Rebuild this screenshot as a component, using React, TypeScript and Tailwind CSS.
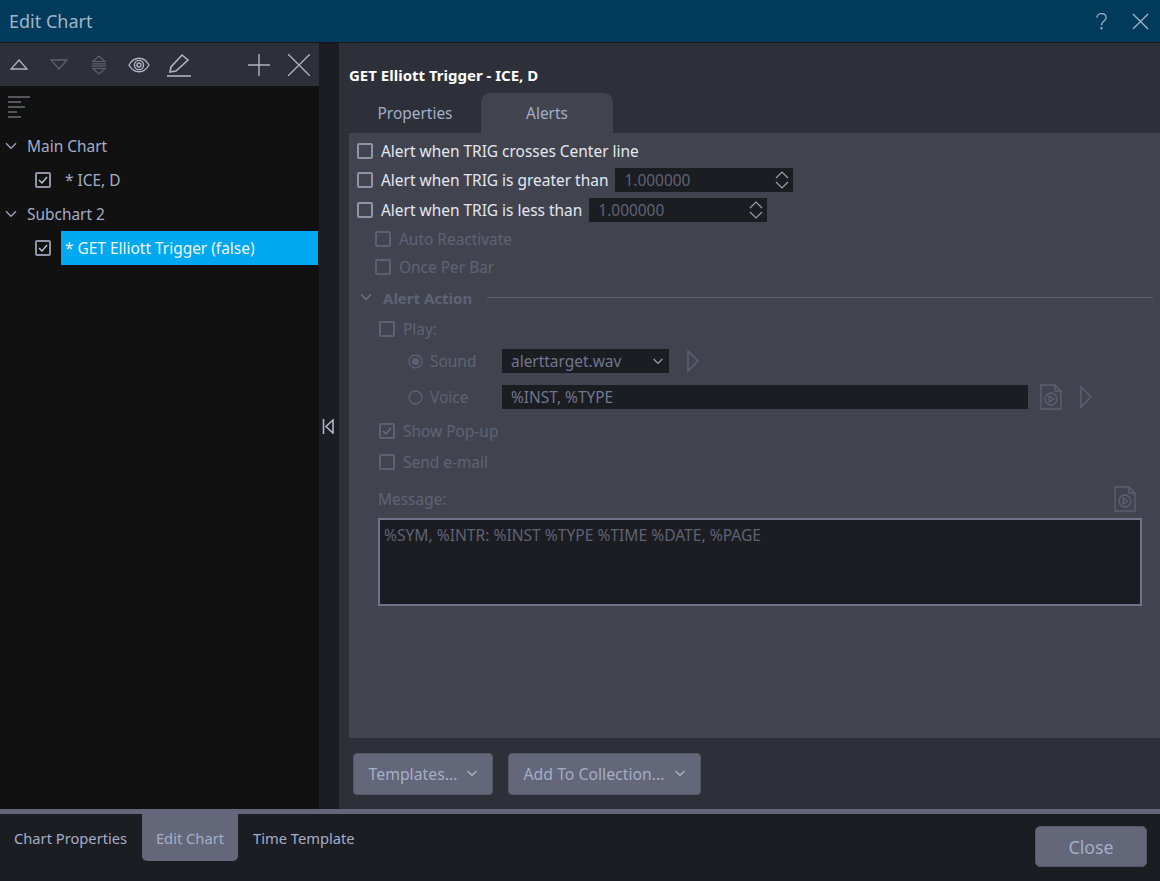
const FONT = "font-['Noto_Sans','Open_Sans',sans-serif]";

function Chevron({ className }: { className: string }) {
  return (
    <svg className={className} viewBox="0 0 12 8" fill="none" stroke="currentColor" strokeWidth={1.4}>
      <path d="M1 1.2 6 6.2 11 1.2" />
    </svg>
  );
}

function Check({ on, dim }: { on?: boolean; dim?: boolean }) {
  return (
    <svg className="w-[16px] h-[16px] shrink-0" viewBox="0 0 16 16" fill="none">
      <rect x="1" y="1" width="14" height="14" rx="1" stroke={dim ? "#5c6072" : "#9094a6"} strokeWidth={2} />
      {on && <path d="M4 8l3 3 5-6" stroke={dim ? "#6a6e80" : "#c4c8d4"} strokeWidth={1.4} />}
    </svg>
  );
}

function Radio({ on }: { on?: boolean }) {
  return (
    <svg className="w-[15px] h-[15px] shrink-0" viewBox="0 0 15 15" fill="none">
      <circle cx="7.5" cy="7.5" r="6.5" stroke="#5c6072" strokeWidth={1.4} />
      {on && <circle cx="7.5" cy="7.5" r="3.6" fill="#5c6072" />}
    </svg>
  );
}

function PlayTri() {
  return (
    <svg className="w-[12px] h-[24px] shrink-0" viewBox="0 0 12 24" fill="none" stroke="#5c6072" strokeWidth={1.4}>
      <path d="M1 2v20L11 12z" />
    </svg>
  );
}

function FilePlay() {
  return (
    <svg className="w-[22px] h-[26px] shrink-0" viewBox="0 0 22 26" fill="none" stroke="#5c6072" strokeWidth={1.3}>
      <path d="M1 1h14l6 6v18H1z" />
      <path d="M15 1v6h6" />
      <circle cx="11" cy="15" r="6" />
      <path d="M9.2 12v6l4.4-3z" />
    </svg>
  );
}

function Spin() {
  return (
    <svg className="w-[14px] h-[20px] -mt-[2px]" viewBox="0 0 14 20" fill="none" stroke="#9a9eae" strokeWidth={1.2}>
      <path d="M1 8l6-6 6 6M1 12l6 6 6-6" />
    </svg>
  );
}

function TreeGroup({ label }: { label: string }) {
  return (
    <div className="h-[34px] flex items-center pl-[5px]">
      <Chevron className="w-[12px] h-[8px] text-[#9ca3b8]" />
      <span className="ml-[10px] pt-[2px] text-[#a3aec8]">{label}</span>
    </div>
  );
}

function Row({ children, className }: { children: React.ReactNode; className: string }) {
  return <div className={`flex items-center ${className}`}>{children}</div>;
}

export default function App() {
  return (
    <div className={`${FONT} w-[1160px] h-[881px] flex flex-col overflow-hidden bg-[#1c1d23] text-[15.45px]`}>
      <div className="h-[43px] shrink-0 flex items-center justify-between pl-[9px] pr-[11px] bg-[#003b5b] border-b border-[#15171c]">
        <span className="text-[18px] text-[#a3b4c8]">Edit Chart</span>
        <div className="flex items-center gap-[25px] text-[#a3b4c8]">
          <svg className="w-[11px] h-[17px]" viewBox="0 0 12 18" fill="none" stroke="currentColor" strokeWidth={1.4}>
            <path d="M1 5c0-6 10-6 10 0 0 3.5-5 3.5-5 8" />
            <circle cx="6" cy="16.4" r="0.6" />
          </svg>
          <svg className="w-[17px] h-[17px]" viewBox="0 0 18 18" fill="none" stroke="currentColor" strokeWidth={1.4}>
            <path d="M1 1l16 16M17 1 1 17" />
          </svg>
        </div>
      </div>

      <div className="flex-1 flex min-h-0">
        <div className="w-[319px] shrink-0 flex flex-col bg-[#111111]">
          <div className="h-[43px] shrink-0 bg-[#2d3039] flex items-center pl-[10px] pr-[9px]">
            <svg className="w-[18px] h-[11px]" viewBox="0 0 18 11" fill="none" stroke="#b0b4c4" strokeWidth={1.3}>
              <path d="M1 10h16L9 1z" />
            </svg>
            <svg className="ml-[22px] w-[18px] h-[11px]" viewBox="0 0 18 11" fill="none" stroke="#5c6072" strokeWidth={1.3}>
              <path d="M1 1h16L9 10z" />
            </svg>
            <svg className="ml-[24px] w-[14px] h-[20px]" viewBox="0 0 14 20" fill="none" stroke="#5c6072" strokeWidth={1.2}>
              <path d="M1 6.5h12L7 1zM1 13.5h12L7 19zM0 8.8h14M0 11.2h14" />
            </svg>
            <svg className="ml-[22px] w-[22px] h-[16px]" viewBox="0 0 22 16" fill="none" stroke="#b0b4c4" strokeWidth={1.4}>
              <path d="M1 8c5-9 15-9 20 0-5 9-15 9-20 0z" />
              <circle cx="11" cy="8" r="4.6" />
              <circle cx="11" cy="8" r="2" />
            </svg>
            <svg className="ml-[17px] w-[24px] h-[24px]" viewBox="0 0 24 24" fill="none" stroke="#b0b4c4" strokeWidth={1.6}>
              <path d="M3 19l1-5L15 2l6 5L9 18z" />
              <path d="M0 23h24" />
            </svg>
            <svg className="ml-auto w-[22px] h-[22px]" viewBox="0 0 22 22" fill="none" stroke="#b0b4c4" strokeWidth={1.4}>
              <path d="M11 0v22M0 11h22" />
            </svg>
            <svg className="ml-[18px] w-[22px] h-[22px]" viewBox="0 0 22 22" fill="none" stroke="#b0b4c4" strokeWidth={1.3}>
              <path d="M0 0l22 22M22 0 0 22" />
            </svg>
          </div>
          <div className="h-[43px] shrink-0 pl-[8px] pt-[10px]">
            <svg className="w-[22px] h-[22px]" viewBox="0 0 22 22" fill="none" stroke="#9a9eae" strokeWidth={1.2}>
              <path d="M0 1h22M0 6h13M0 11h17M0 16h9M0 21h13" />
            </svg>
          </div>
          <TreeGroup label="Main Chart" />
          <div className="h-[34px] flex items-center pl-[35px]">
            <Check on />
            <span className="ml-[14px] pt-[2px] text-[#a3aec8]">* ICE, D</span>
          </div>
          <TreeGroup label="Subchart 2" />
          <div className="h-[34px] flex items-center pl-[35px]">
            <Check on />
            <span className="ml-[10px] mr-[1px] flex-1 h-full flex items-center pl-[4px] pt-[2px] bg-[#00a8f0] text-[#eef6fc]">
              * GET Elliott Trigger (false)
            </span>
          </div>
        </div>

        <div className="w-[20px] shrink-0 flex items-center justify-center bg-[#1c1d23]">
          <svg className="w-[12px] h-[15px] -ml-[2px]" viewBox="0 0 12 15" fill="none" stroke="#b0b4c4" strokeWidth={1.6}>
            <path d="M1.5 0v15M11 1 4 7.5l7 6.5z" />
          </svg>
        </div>

        <div className="flex-1 flex flex-col bg-[#2d3039] pl-[10px]">
          <div className="h-[50px] shrink-0 flex items-end pb-[7px] text-[15px] font-bold text-white">
            GET Elliott Trigger - ICE, D
          </div>
          <div className="h-[40px] shrink-0 flex">
            <div className="w-[132px] flex items-center justify-center pt-[2px] text-[#a3aec8]">Properties</div>
            <div className="w-[132px] flex items-center justify-center pt-[2px] rounded-t-[9px] bg-[#41444f] text-[#a3aec8]">Alerts</div>
          </div>

          <div className="h-[605px] shrink-0 flex flex-col bg-[#41444f] pt-[3px] text-[#e4e7ef] [&_span]:pt-[2px]">
            <Row className="h-[30px] pl-[8px] gap-[8px]">
              <Check />
              <span>Alert when TRIG crosses Center line</span>
            </Row>
            <Row className="h-[24px] mt-[2px] pl-[8px]">
              <Check />
              <span className="ml-[8px]">Alert when TRIG is greater than</span>
              <div className="ml-[7px] w-[178px] h-full flex items-center justify-between pl-[9px] pr-[4px] pt-[2px] bg-[#1c1d23] text-[#5f6374]">
                1.000000
                <Spin />
              </div>
            </Row>
            <Row className="h-[24px] mt-[6px] pl-[8px]">
              <Check />
              <span className="ml-[8px]">Alert when TRIG is less than</span>
              <div className="ml-[7px] w-[178px] h-full flex items-center justify-between pl-[9px] pr-[4px] pt-[2px] bg-[#1c1d23] text-[#5f6374]">
                1.000000
                <Spin />
              </div>
            </Row>

            <div className="flex flex-col text-[#5f6374]">
              <Row className="h-[28px] mt-[3px] pl-[26px] gap-[8px]">
                <Check dim />
                <span>Auto Reactivate</span>
              </Row>
              <Row className="h-[28px] pl-[26px] gap-[8px]">
                <Check dim />
                <span>Once Per Bar</span>
              </Row>
              <Row className="h-[32px] pl-[11px] pr-[7px]">
                <Chevron className="w-[12px] h-[8px] text-[#6e7284]" />
                <span className="ml-[11px] text-[15px] font-bold">Alert Action</span>
                <div className="ml-[15px] flex-1 h-px bg-[#5c6072]" />
              </Row>
              <Row className="h-[32px] pl-[30px] gap-[8px]">
                <Check dim />
                <span>Play:</span>
              </Row>
              <Row className="h-[24px] mt-[4px] pl-[59px]">
                <Radio on />
                <span className="ml-[7px] w-[72px]">Sound</span>
                <div className="w-[167px] h-full flex items-center justify-between pl-[9px] pr-[5px] pt-[2px] bg-[#1c1d23] text-[#70778e]">
                  alerttarget.wav
                  <Chevron className="w-[12px] h-[7px] -mt-[2px] text-[#9a9eae]" />
                </div>
                <div className="ml-[18px]"><PlayTri /></div>
              </Row>
              <Row className="h-[24px] mt-[12px] pl-[59px]">
                <Radio />
                <span className="ml-[7px] w-[72px]">Voice</span>
                <div className="w-[526px] h-full flex items-center pl-[9px] pt-[2px] bg-[#1c1d23] text-[#70778e]">%INST, %TYPE</div>
                <div className="ml-[12px]"><FilePlay /></div>
                <div className="ml-[18px]"><PlayTri /></div>
              </Row>
              <Row className="h-[32px] mt-[6px] pl-[30px] gap-[8px]">
                <Check on dim />
                <span>Show Pop-up</span>
              </Row>
              <Row className="h-[30px] pl-[30px] gap-[8px]">
                <Check dim />
                <span>Send e-mail</span>
              </Row>
              <Row className="h-[30px] mt-[7px] pl-[29px] pr-[24px] justify-between">
                <span>Message:</span>
                <FilePlay />
              </Row>
              <div className="mt-[4px] ml-[29px] mr-[18px] h-[88px] border-2 border-[#70748a] bg-[#1c1d23] pl-[4px] pr-[5px] pt-[4px] text-[15.6px] text-[#5f6374]">
                %SYM, %INTR: %INST %TYPE %TIME %DATE, %PAGE
              </div>
            </div>
          </div>

          <div className="flex-1 flex items-center gap-[15px] pl-[4px] text-[15.8px] text-[#a3aec8]">
            <button className="w-[140px] h-[42px] pl-px flex items-center justify-center gap-[9px] rounded-[4px] bg-[#636779] border border-[#555868]">
              <span className="pt-[2px]">Templates...</span>
              <Chevron className="w-[12px] h-[7px] text-[#b0b8cc]" />
            </button>
            <button className="w-[193px] h-[42px] pl-px flex items-center justify-center gap-[10px] rounded-[4px] bg-[#636779] border border-[#555868]">
              <span className="pt-[2px]">Add To Collection...</span>
              <Chevron className="w-[12px] h-[7px] text-[#b0b8cc]" />
            </button>
          </div>
        </div>
      </div>

      <div className="h-[5px] shrink-0 bg-[#636779]" />

      <div className="h-[67px] shrink-0 flex items-start pl-[14px] pr-[13px] text-[14.7px] text-[#a3aec8]">
        <div className="w-[113px] h-[47px] pt-[2px] flex items-center whitespace-nowrap">Chart Properties</div>
        <div className="ml-[15px] w-[96px] h-[47px] pt-[2px] flex items-center justify-center rounded-b-[5px] bg-[#636779]">Edit Chart</div>
        <div className="ml-[15px] h-[47px] pt-[2px] flex items-center">Time Template</div>
        <button className="ml-auto mt-[12px] w-[112px] h-[41px] pt-[2px] rounded-[5px] bg-[#636779] border border-[#555868] text-[17.8px]">Close</button>
      </div>
    </div>
  );
}
